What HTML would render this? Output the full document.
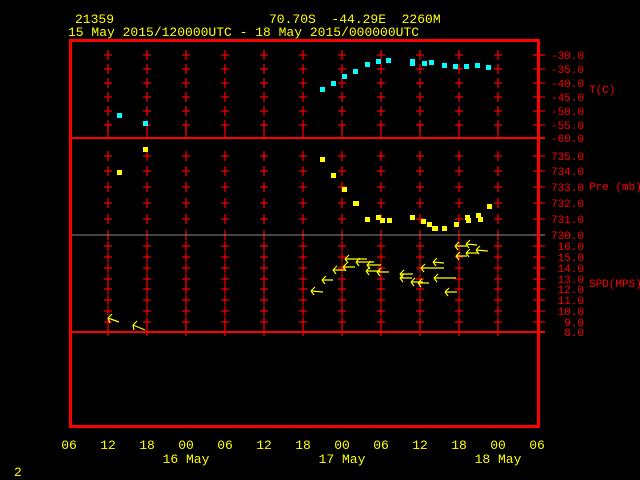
<!DOCTYPE html>
<html><head><style>
html,body{margin:0;padding:0;background:#000;width:640px;height:480px;overflow:hidden}
svg{display:block}
text{font-family:"Liberation Mono","DejaVu Sans Mono",monospace}
</style></head><body>
<svg width="640" height="480" viewBox="0 0 640 480" xmlns="http://www.w3.org/2000/svg">
<defs>
<g id="p" stroke="#f00" stroke-width="1.2"><line x1="0" y1="-5" x2="0" y2="5"/><line x1="-4" y1="0" x2="4" y2="0"/></g>
<g id="row">
<use href="#p" x="108"/><use href="#p" x="147"/><use href="#p" x="186"/><use href="#p" x="225"/><use href="#p" x="264"/><use href="#p" x="303"/><use href="#p" x="342"/><use href="#p" x="381"/><use href="#p" x="420"/><use href="#p" x="459"/><use href="#p" x="498"/>
<line x1="533" y1="0" x2="545" y2="0" stroke="#f00" stroke-width="1.2"/>
</g>
</defs>
<text x="75" y="23" fill="#ff0" font-size="13">21359</text>
<text x="269" y="23" fill="#ff0" font-size="13" xml:space="preserve">70.70S  -44.29E  2260M</text>
<text x="68" y="36" fill="#ff0" font-size="13">15 May 2015/120000UTC - 18 May 2015/000000UTC</text>

<g>
<use href="#row" y="55"/><use href="#row" y="69"/><use href="#row" y="83"/><use href="#row" y="97"/><use href="#row" y="111"/><use href="#row" y="125"/>
<use href="#row" y="156"/><use href="#row" y="171"/><use href="#row" y="187"/><use href="#row" y="203"/><use href="#row" y="219"/>
<use href="#row" y="246"/><use href="#row" y="257"/><use href="#row" y="268"/><use href="#row" y="279"/><use href="#row" y="289"/><use href="#row" y="300"/><use href="#row" y="311"/><use href="#row" y="322"/>
</g>
<g stroke="#f00" stroke-width="1.2">
<line x1="108" y1="125" x2="108" y2="138"/><line x1="147" y1="125" x2="147" y2="138"/><line x1="186" y1="125" x2="186" y2="138"/><line x1="225" y1="125" x2="225" y2="138"/><line x1="264" y1="125" x2="264" y2="138"/><line x1="303" y1="125" x2="303" y2="138"/><line x1="342" y1="125" x2="342" y2="138"/><line x1="381" y1="125" x2="381" y2="138"/><line x1="420" y1="125" x2="420" y2="138"/><line x1="459" y1="125" x2="459" y2="138"/><line x1="498" y1="125" x2="498" y2="138"/>
<line x1="108" y1="230" x2="108" y2="240"/><line x1="147" y1="230" x2="147" y2="240"/><line x1="186" y1="230" x2="186" y2="240"/><line x1="225" y1="230" x2="225" y2="240"/><line x1="264" y1="230" x2="264" y2="240"/><line x1="303" y1="230" x2="303" y2="240"/><line x1="342" y1="230" x2="342" y2="240"/><line x1="381" y1="230" x2="381" y2="240"/><line x1="420" y1="230" x2="420" y2="240"/><line x1="459" y1="230" x2="459" y2="240"/><line x1="498" y1="230" x2="498" y2="240"/>
<line x1="108" y1="326" x2="108" y2="336"/><line x1="147" y1="326" x2="147" y2="336"/><line x1="186" y1="326" x2="186" y2="336"/><line x1="225" y1="326" x2="225" y2="336"/><line x1="264" y1="326" x2="264" y2="336"/><line x1="303" y1="326" x2="303" y2="336"/><line x1="342" y1="326" x2="342" y2="336"/><line x1="381" y1="326" x2="381" y2="336"/><line x1="420" y1="326" x2="420" y2="336"/><line x1="459" y1="326" x2="459" y2="336"/><line x1="498" y1="326" x2="498" y2="336"/>
<line x1="71" y1="138" x2="545" y2="138" stroke-width="2"/>
<line x1="71" y1="332" x2="545" y2="332" stroke-width="2"/>
<line x1="533" y1="55" x2="545" y2="55"/>
<line x1="533" y1="235" x2="545" y2="235"/>
</g>
<line x1="71" y1="235" x2="545" y2="235" stroke="#888" stroke-width="1"/>
<rect x="70.5" y="40.5" width="468" height="386" fill="none" stroke="#f00" stroke-width="3"/>

<g fill="#f00" font-size="11" text-anchor="end">
<text x="584" y="59">-30.0</text><text x="584" y="73">-35.0</text><text x="584" y="87">-40.0</text><text x="584" y="101">-45.0</text><text x="584" y="115">-50.0</text><text x="584" y="129">-55.0</text><text x="584" y="142">-60.0</text>
<text x="584" y="160">735.0</text><text x="584" y="175">734.0</text><text x="584" y="191">733.0</text><text x="584" y="207">732.0</text><text x="584" y="223">731.0</text><text x="584" y="239">730.0</text>
<text x="584" y="250">16.0</text><text x="584" y="261">15.0</text><text x="584" y="272">14.0</text><text x="584" y="283">13.0</text><text x="584" y="293">12.0</text><text x="584" y="304">11.0</text><text x="584" y="315">10.0</text><text x="584" y="326">9.0</text><text x="584" y="336">8.0</text>
</g>
<g fill="#f00" font-size="11">
<text x="589" y="93">T(C)</text><text x="589" y="190">Pre (mb)</text><text x="589" y="287">SPD(MPS)</text>
</g>

<g fill="#0ff">
<rect x="117" y="113" width="5" height="5"/><rect x="143" y="121" width="5" height="5"/>
<rect x="320" y="87" width="5" height="5"/><rect x="331" y="81" width="5" height="5"/><rect x="342" y="74" width="5" height="5"/><rect x="353" y="69" width="5" height="5"/><rect x="365" y="62" width="5" height="5"/><rect x="376" y="59" width="5" height="5"/><rect x="386" y="58" width="5" height="5"/><rect x="410" y="61" width="5" height="5"/><rect x="410" y="59" width="5" height="4"/><rect x="422" y="61" width="5" height="5"/><rect x="429" y="60" width="5" height="5"/><rect x="442" y="63" width="5" height="5"/><rect x="453" y="64" width="5" height="5"/><rect x="464" y="64" width="5" height="5"/><rect x="475" y="63" width="5" height="5"/><rect x="486" y="65" width="5" height="5"/>
</g>
<g fill="#ff0">
<rect x="117" y="170" width="5" height="5"/><rect x="143" y="147" width="5" height="5"/>
<rect x="320" y="157" width="5" height="5"/><rect x="331" y="173" width="5" height="5"/><rect x="342" y="187" width="5" height="5"/><rect x="353" y="201" width="6" height="5"/><rect x="365" y="217" width="5" height="5"/><rect x="376" y="215" width="5" height="5"/><rect x="380" y="218" width="5" height="5"/><rect x="387" y="218" width="5" height="5"/><rect x="410" y="215" width="5" height="5"/><rect x="421" y="219" width="5" height="5"/><rect x="427" y="222" width="5" height="5"/><rect x="432" y="226" width="6" height="5"/><rect x="442" y="226" width="5" height="5"/><rect x="454" y="222" width="5" height="5"/><rect x="465" y="215" width="5" height="5"/><rect x="466" y="218" width="5" height="5"/><rect x="476" y="213" width="5" height="5"/><rect x="478" y="217" width="5" height="5"/><rect x="487" y="204" width="5" height="5"/>
</g>
<g stroke="#ff0" stroke-width="1.2" fill="none">
<path d="M108 318 L119 322 M108 318 l4 -4 M108 318 l2 5"/>
<path d="M133 325 L145 330 M133 325 l4 -4 M133 325 l1 5"/>
<path d="M311 291 L323 292 M311 291 l4 -4 M311 291 l3 4"/>
<path d="M322 280 L333 280 M322 280 l4 -4 M322 280 l3 4"/>
<path d="M333 270 L345 270 M333 270 l4 -4 M333 270 l3 4"/>
<path d="M345 259 L367 259 M345 259 l4 -4 M345 259 l3 4"/>
<path d="M356 262 L374 262 M356 262 l4 -4 M356 262 l3 4"/>
<path d="M343 267 L355 267 M343 267 l4 -4 M343 267 l3 4"/>
<path d="M367 265 L381 265 M367 265 l4 -4 M367 265 l3 4"/>
<path d="M366 271 L380 271 M366 271 l4 -4 M366 271 l3 4"/>
<path d="M377 272 L389 272 M377 272 l4 -4 M377 272 l3 4"/>
<path d="M400 274 L413 274 M400 274 l4 -4 M400 274 l3 4"/>
<path d="M400 278 L412 278 M400 278 l4 -4 M400 278 l3 4"/>
<path d="M411 282 L423 282 M411 282 l4 -4 M411 282 l3 4"/>
<path d="M418 283 L429 283 M418 283 l4 -4 M418 283 l3 4"/>
<path d="M421 268 L444 268 M421 268 l4 -4 M421 268 l3 4"/>
<path d="M433 262 L444 263 M433 262 l4 -4 M433 262 l3 4"/>
<path d="M434 278 L456 278 M434 278 l4 -4 M434 278 l3 4"/>
<path d="M445 292 L457 292 M445 292 l4 -4 M445 292 l3 4"/>
<path d="M455 246 L467 246 M455 246 l4 -4 M455 246 l3 4"/>
<path d="M456 256 L467 256 M456 256 l4 -4 M456 256 l3 4"/>
<path d="M466 244 L477 245 M466 244 l4 -4 M466 244 l3 4"/>
<path d="M466 253 L478 253 M466 253 l4 -4 M466 253 l3 4"/>
<path d="M476 250 L488 251 M476 250 l4 -4 M476 250 l3 4"/>
</g>

<g fill="#ff0" font-size="13" text-anchor="middle">
<text x="69" y="449">06</text><text x="108" y="449">12</text><text x="147" y="449">18</text><text x="186" y="449">00</text><text x="225" y="449">06</text><text x="264" y="449">12</text><text x="303" y="449">18</text><text x="342" y="449">00</text><text x="381" y="449">06</text><text x="420" y="449">12</text><text x="459" y="449">18</text><text x="498" y="449">00</text><text x="537" y="449">06</text>
<text x="186" y="463">16 May</text><text x="342" y="463">17 May</text><text x="498" y="463">18 May</text>
</g>
<text x="14" y="476" fill="#ff0" font-size="13">2</text>
</svg>
</body></html>
